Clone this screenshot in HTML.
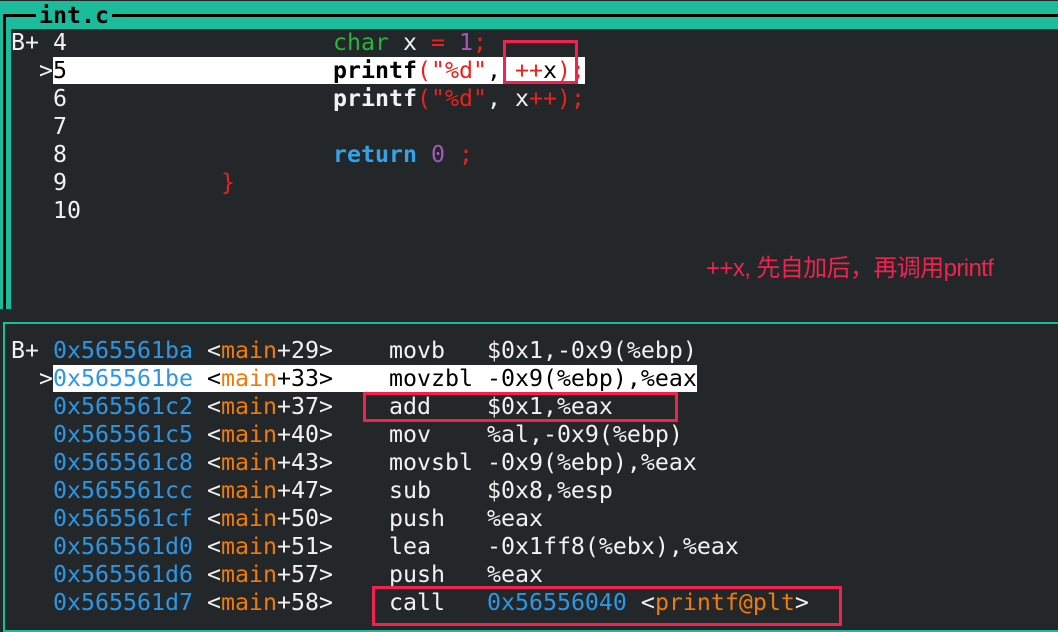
<!DOCTYPE html>
<html><head><meta charset="utf-8"><style>
html,body{margin:0;padding:0}
body{width:1058px;height:632px;background:#232729;position:relative;overflow:hidden;font-family:"DejaVu Sans Mono","Liberation Mono",monospace;font-size:23.25px;color:#f2f2f2}
.abs{position:absolute}
.row{position:absolute;left:11px;height:28px;line-height:28px;white-space:pre}
.hl{background:#fff;color:#000}
.g{color:#27b53b}.r{color:#e8231f}.p{color:#a15bb5}.b{color:#33a2e8}.o{color:#f07b0a}.bl{color:#2c97e6}
b{font-weight:bold}
.box{position:absolute;border:3px solid #f2224f;box-sizing:border-box}
</style></head><body>
<div class="abs" style="left:0;top:1px;width:1058px;height:28px;background:#1abc9c"></div>
<div class="abs" style="left:3px;top:14px;width:1055px;height:3px;background:#000"></div>
<div class="abs" style="left:3px;top:14px;width:3px;height:295px;background:#000"></div>
<div class="abs" style="left:0;top:1px;width:3px;height:308px;background:#1abc9c"></div>
<div class="abs" style="left:6px;top:17px;width:5px;height:292px;background:#1abc9c"></div>
<div class="abs" style="left:36px;top:1px;height:28px;line-height:30px;padding:0 3px;background:#1abc9c;color:#000;font-weight:bold;font-size:23.25px">int.c</div>
<div class="abs" style="left:11px;top:29px;width:1047px;height:280px;background:#232729"></div>

<div class="row" style="top:29px">B+ 4                   <span class="g">char</span> x <span class="r">=</span> <span class="p">1</span><span class="r">;</span></div>
<div class="row" style="top:57px">  &gt;<span class="hl">5                   <b>printf</b><span class="r">(</span><span class="r">"%d"</span>, <span class="r">++</span>x<span class="r">)</span><span class="r">;</span></span></div>
<div class="row" style="top:85px">   6                   <b>printf</b><span class="r">(</span><span class="r">"%d"</span>, x<span class="r">++</span><span class="r">);</span></div>
<div class="row" style="top:113px">   7</div>
<div class="row" style="top:141px">   8                   <b class="b">return</b> <span class="p">0</span> <span class="r">;</span></div>
<div class="row" style="top:169px">   9           <span class="r">}</span></div>
<div class="row" style="top:197px">   10</div>
<div class="box" style="left:503px;top:40px;width:75px;height:44px"></div>

<div class="abs" style="left:706px;top:254px;font-family:'Liberation Sans','Noto Sans CJK SC',sans-serif;font-size:24px;line-height:30px;color:#f2224f;letter-spacing:-0.6px;white-space:nowrap">++x, 先自加后，再调用printf</div>

<div class="abs" style="left:3px;top:322px;width:1055px;height:2px;background:#1abc9c"></div>
<div class="abs" style="left:3px;top:322px;width:2px;height:310px;background:#1abc9c"></div>
<div class="abs" style="left:3px;top:630px;width:1055px;height:2px;background:#1abc9c"></div>

<div class="row" style="top:337px">B+ <span class="bl">0x565561ba</span> &lt;<span class="o">main</span>+29&gt;    movb   $0x1,-0x9(%ebp)</div>
<div class="row" style="top:365px">  &gt;<span class="hl"><span class="bl">0x565561be</span> &lt;<span class="o">main</span>+33&gt;    movzbl -0x9(%ebp),%eax</span></div>
<div class="row" style="top:393px">   <span class="bl">0x565561c2</span> &lt;<span class="o">main</span>+37&gt;    add    $0x1,%eax</div>
<div class="row" style="top:421px">   <span class="bl">0x565561c5</span> &lt;<span class="o">main</span>+40&gt;    mov    %al,-0x9(%ebp)</div>
<div class="row" style="top:449px">   <span class="bl">0x565561c8</span> &lt;<span class="o">main</span>+43&gt;    movsbl -0x9(%ebp),%eax</div>
<div class="row" style="top:477px">   <span class="bl">0x565561cc</span> &lt;<span class="o">main</span>+47&gt;    sub    $0x8,%esp</div>
<div class="row" style="top:505px">   <span class="bl">0x565561cf</span> &lt;<span class="o">main</span>+50&gt;    push   %eax</div>
<div class="row" style="top:533px">   <span class="bl">0x565561d0</span> &lt;<span class="o">main</span>+51&gt;    lea    -0x1ff8(%ebx),%eax</div>
<div class="row" style="top:561px">   <span class="bl">0x565561d6</span> &lt;<span class="o">main</span>+57&gt;    push   %eax</div>
<div class="row" style="top:589px">   <span class="bl">0x565561d7</span> &lt;<span class="o">main</span>+58&gt;    call   <span class="bl">0x56556040</span> &lt;<span class="o">printf@plt</span>&gt;</div>
<div class="box" style="left:363px;top:392px;width:315px;height:30px"></div>
<div class="box" style="left:372px;top:586px;width:470px;height:40px"></div>
</body></html>
